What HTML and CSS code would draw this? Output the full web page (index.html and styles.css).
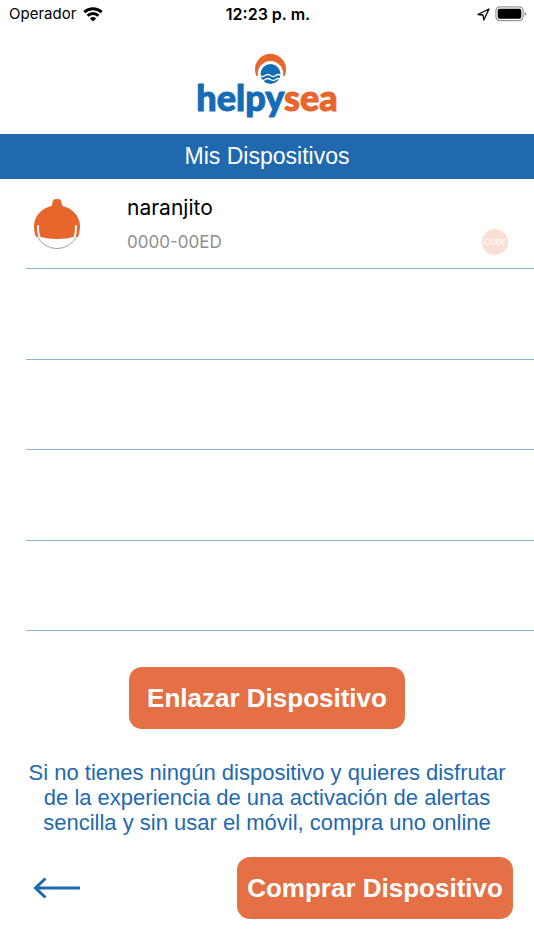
FILE: index.html
```html
<!DOCTYPE html>
<html lang="es">
<head>
<meta charset="utf-8">
<meta name="viewport" content="width=device-width, initial-scale=1">
<title>Mis Dispositivos</title>
<link rel="stylesheet" href="styles.css">
</head>
<body>
<div class="status">
  <div class="carrier">
    <span>Operador</span>
    <svg width="20" height="15" viewBox="0 0 20 15" fill="none" stroke="#000" stroke-width="3">
      <path d="M1.300 5.200a12.500 12.500 0 0 1 17.400 0M4.600 8.700a7.700 7.700 0 0 1 10.800 0"/>
      <path d="M10 14.500 6.900 11.500a4.500 4.500 0 0 1 6.200 0z" fill="#000" stroke="none"/>
    </svg>
  </div>
  <time class="clock">12:23 p. m.</time>
  <div class="indicators">
    <svg width="13" height="13" viewBox="0 0 13 13" fill="none" stroke="#000" stroke-width="1.300" stroke-linejoin="round"><path d="M12 1 1 6.500l5 .5.800 5z"/></svg>
    <svg width="32" height="16" viewBox="0 0 32 16">
      <rect x=".9" y=".9" width="27.200" height="13.700" rx="4" fill="#fff" stroke="#999" stroke-width="1.300"/>
      <rect x="2.700" y="2.700" width="23.600" height="10.100" rx="2" fill="#000"/>
      <path d="M29.700 5.500v4.500q1.700-.8 1.700-2.250t-1.700-2.250z" fill="#999"/>
    </svg>
  </div>
</div>
<header class="brand">
  <svg width="144" height="74" viewBox="0 0 144 74" role="img" aria-label="helpysea">
    <path d="M61.500 28A15.500 15.500 0 1 1 89.500 28L88 28A12.700 12.700 0 1 0 63 28z" fill="#e8652b"/>
    <circle cx="75.500" cy="26" r="10" fill="#146cb5"/>
    <path d="M65 27.500q2.600 2 5.200 0t5.300 0 5.300 0 5.200 0M65 31.500q2.600 2 5.200 0t5.300 0 5.300 0 5.200 0" fill="none" stroke="#fff" stroke-width="1.300"/>
    <text class="wordmark" x="72" y="63" text-anchor="middle"><tspan class="help">helpy</tspan><tspan class="sea">sea</tspan></text>
  </svg>
</header>
<h1 class="title">Mis Dispositivos</h1>
<ul class="devices">
  <li class="device">
    <svg class="buoy" width="48" height="52" viewBox="0 0 48 52">
      <path d="M4 38a22.200 22.200 0 0 0 40 0" fill="none" stroke="#888" stroke-width=".8"/>
      <path d="M20.500 1.500q3.500-1 7 0l2 6.500C40 10.500 47 18.500 47 28.500q0 5-1.800 10.200h-3.700Q33 41 24 41T6.500 38.700H2.800Q1 33.500 1 28.500C1 18.500 8 10.500 18.500 8z" fill="#e8652b"/>
      <path d="M5 28q-.3 6 1.500 11M43 28q.3 6-1.500 11" fill="none" stroke="#fff" stroke-width="2" stroke-linecap="round"/>
    </svg>
    <div class="info">
      <span class="name">naranjito</span>
      <span class="code">0000-00ED</span>
    </div>
    <button class="badge" type="button">CODE</button>
  </li>
  <li class="device"></li>
  <li class="device"></li>
  <li class="device"></li>
  <li class="device"></li>
</ul>
<main class="actions">
  <button class="button" type="button">Enlazar Dispositivo</button>
  <p class="hint">Si no tienes ningún dispositivo y quieres disfrutar de la experiencia de una activación de alertas sencilla y sin usar el móvil, compra uno online</p>
</main>
<footer class="bottom">
  <button class="back" type="button" aria-label="Volver">
    <svg width="48" height="22" viewBox="0 0 48 22" fill="none" stroke="#1f69ae" stroke-width="3"><path d="M47 11H3M12.500 1.500 2.500 11l10 9.500"/></svg>
  </button>
  <button class="button" type="button">Comprar Dispositivo</button>
</footer>
</body>
</html>
```
FILE: styles.css
```css
* { box-sizing: border-box; }
body {
  margin: 0;
  min-height: 100vh;
  display: flex;
  flex-direction: column;
  background: #fff;
  color: #000;
  font-family: "Liberation Sans", Arial, sans-serif;
}
svg { display: block; flex: none; }
button { border: 0; padding: 0; font: inherit; cursor: pointer; }
.status {
  display: grid;
  grid-template-columns: 1fr auto 1fr;
  align-items: center;
  height: 28px;
  padding: 0 7px 0 9px;
  font: 15px/20px Inter, sans-serif;
}
.carrier { display: flex; align-items: center; gap: 7px; }
.clock { font-size: 16px; font-weight: 600; }
.indicators { display: flex; align-items: center; justify-content: flex-end; gap: 5px; }
.brand { display: flex; justify-content: center; padding: 20px 0 12px; }
.brand svg { overflow: visible; }
.wordmark {
  font: 900 36px Lato, sans-serif;
  stroke-width: 1px;
  stroke-linejoin: round;
}
.help { fill: #146cb5; stroke: #146cb5; }
.sea { fill: #e8652b; stroke: #e8652b; }
.title {
  margin: 0;
  background: #2069ae;
  color: #fff;
  font-size: 23px;
  font-weight: 400;
  line-height: 45px;
  text-align: center;
}
.devices {
  flex: 1;
  display: flex;
  flex-direction: column;
  margin: 0;
  padding: 0 0 0 26px;
  list-style: none;
}
.device {
  flex: 1 0 90px;
  display: flex;
  align-items: center;
  padding: 0 26px 0 7px;
  border-bottom: 1px solid #8bb3d3;
}
.info {
  flex: 1;
  display: flex;
  flex-direction: column;
  gap: 10px;
  margin-left: 46px;
  font-family: Inter, sans-serif;
}
.name { font-size: 21px; line-height: 26px; }
.code { color: #8e8e8e; font-size: 17px; line-height: 22px; }
.badge {
  align-self: flex-end;
  width: 26px;
  height: 26px;
  margin-bottom: 13px;
  border-radius: 50%;
  background: #fadfd3;
  color: #fff;
  font: 8px/26px Inter, sans-serif;
}
.actions {
  display: flex;
  flex-direction: column;
  align-items: center;
  padding: 36px 20px 22px;
}
.button {
  width: 276px;
  height: 62px;
  border-radius: 13px;
  background: #e57045;
  color: #fff;
  font-size: 26px;
  font-weight: 700;
}
.hint {
  margin: 31px 0 0;
  color: #1f69ae;
  font-size: 22px;
  line-height: 25px;
  text-align: center;
}
.bottom {
  display: flex;
  align-items: center;
  justify-content: space-between;
  padding: 0 21px 31px 33px;
}
.back { background: none; }
```
